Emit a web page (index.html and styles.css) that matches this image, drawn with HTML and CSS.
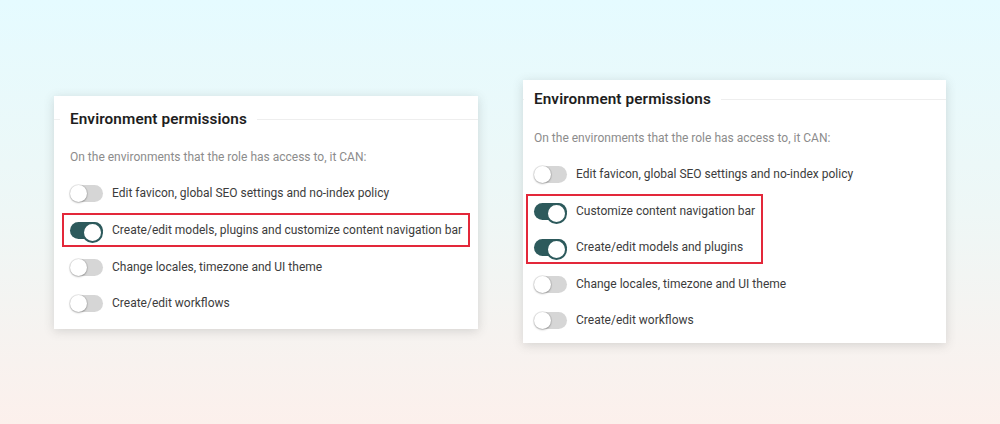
FILE: index.html
```html
<!DOCTYPE html>
<html>
<head>
<meta charset="utf-8">
<link rel="stylesheet" href="styles.css">
</head>
<body>
<div class="stage">
  <section class="card card-left">
    <div class="head"><span class="lead-line"></span><h2 class="title">Environment permissions</h2><span class="rule"></span></div>
    <p class="sub">On the environments that the role has access to, it CAN:</p>
    <div class="row"><span class="toggle"></span><span class="label">Edit favicon, global SEO settings and no-index policy</span></div>
    <div class="hl">
      <div class="row"><span class="toggle on"></span><span class="label">Create/edit models, plugins and customize content navigation bar</span></div>
    </div>
    <div class="row"><span class="toggle"></span><span class="label">Change locales, timezone and UI theme</span></div>
    <div class="row"><span class="toggle"></span><span class="label">Create/edit workflows</span></div>
  </section>
  <section class="card card-right">
    <div class="head"><span class="lead-line"></span><h2 class="title">Environment permissions</h2><span class="rule"></span></div>
    <p class="sub">On the environments that the role has access to, it CAN:</p>
    <div class="row"><span class="toggle"></span><span class="label">Edit favicon, global SEO settings and no-index policy</span></div>
    <div class="hl">
      <div class="row"><span class="toggle on"></span><span class="label">Customize content navigation bar</span></div>
      <div class="row"><span class="toggle on"></span><span class="label">Create/edit models and plugins</span></div>
    </div>
    <div class="row"><span class="toggle"></span><span class="label">Change locales, timezone and UI theme</span></div>
    <div class="row"><span class="toggle"></span><span class="label">Create/edit workflows</span></div>
  </section>
</div>
</body>
</html>
```
FILE: styles.css
```css
* { box-sizing: border-box; }
html, body { margin: 0; padding: 0; }
body {
  width: 1000px;
  height: 424px;
  overflow: hidden;
  background: linear-gradient(180deg, #e5fbff 0%, #eef7f6 50%, #fcf0ec 100%);
  font-family: Roboto, "Liberation Sans", Arial, sans-serif;
}
.stage {
  display: flex;
  align-items: flex-start;
  gap: 45px;
  padding-left: 54px;
}
.card {
  --pad: 16px;
  background: #fff;
  box-shadow: 0 2px 10px rgba(60, 60, 60, 0.18);
  display: flex;
  flex-direction: column;
  padding-left: var(--pad);
}
.card-left { width: 424px; margin-top: 96px; padding-top: 13px; padding-bottom: 8px; }
.card-right { --pad: 11px; width: 423px; margin-top: 80px; padding-top: 9px; padding-bottom: 5px; }
.card-right .sub { margin-top: 20px; }
.head {
  display: flex;
  align-items: center;
  height: 20px;
  margin-left: calc(-1 * var(--pad));
}
.lead-line { width: calc(var(--pad) - 10px); border-top: 1px solid #f0f0f0; margin-right: 10px; }
.title {
  margin: 0;
  font-size: 15.3px;
  line-height: 20px;
  font-weight: 600;
  color: #1e1e1e;
  letter-spacing: 0.1px;
}
.rule { flex: 1; border-top: 1px solid #eeeeee; margin-left: 10px; }
.sub {
  margin: 19px 0 9px;
  font-size: 12px;
  line-height: 18px;
  color: #8c8c8c;
}
.row {
  display: flex;
  align-items: center;
  height: 36px;
  gap: 9px;
}
.label { font-size: 12px; color: #3c3c3c; white-space: nowrap; }
.toggle {
  position: relative;
  flex: none;
  width: 33px;
  height: 17px;
  border-radius: 9px;
  background: #d6d6d6;
}
.toggle::after {
  content: "";
  position: absolute;
  left: 0;
  top: 0;
  width: 17px;
  height: 17px;
  border-radius: 50%;
  background: #fff;
  box-shadow: 0 0 0 1px rgba(0,0,0,0.08), 0 1px 2px rgba(0,0,0,0.25);
}
.toggle.on { background: #2d5a5c; }
.toggle.on::after {
  left: auto;
  right: 0;
  border: 2px solid #2d5a5c;
  box-shadow: none;
}
.hl {
  display: flex;
  flex-direction: column;
  gap: 6px;
  width: fit-content;
  margin: 2px 0 2px -8px;
  padding: 0 6px 0 6px;
  border: 2px solid #e3283a;
}
.hl .row { height: 30px; }
```
